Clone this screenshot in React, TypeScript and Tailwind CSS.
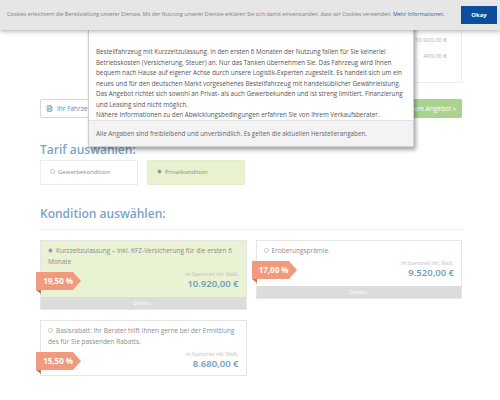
import { FileText } from 'lucide-react'

const popoverLines = [
  'Bestellfahrzeug mit Kurzzeitzulassung. In den ersten 6 Monaten der Nutzung fallen für Sie keinerlei',
  'Betriebskosten (Versicherung, Steuer) an. Nur das Tanken übernehmen Sie. Das Fahrzeug wird Ihnen',
  'bequem nach Hause auf eigener Achse durch unsere Logistik-Experten zugestellt. Es handelt sich um ein',
  'neues und für den deutschen Markt vorgesehenes Bestellfahrzeug mit handelsüblicher Gewährleistung.',
  'Das Angebot richtet sich sowohl an Privat- als auch Gewerbekunden und ist streng limitiert. Finanzierung',
  'und Leasing sind nicht möglich.',
  'Nähere Informationen zu den Abwicklungsbedingungen erfahren Sie von Ihrem Verkaufsberater.',
]

function Radio({ checked = false }: { checked?: boolean }) {
  return (
    <span className="inline-flex items-center justify-center w-[5px] h-[5px] rounded-full border border-[#c8c8c8] bg-white align-middle mr-[3px] relative -top-[1px]">
      {checked && <span className="w-[3px] h-[3px] rounded-full bg-[#8a8a8a]" />}
    </span>
  )
}

function Badge({ value }: { value: string }) {
  return (
    <div className="absolute left-[-12px] top-1/2 -translate-y-1/2 flex">
      <div className="relative h-[18px] w-[37px] bg-[#f19a7d] text-white font-bold text-[8px] leading-[18px] pl-[5px]">
        {value}
        <div className="absolute left-0 top-[18px] w-0 h-0 border-t-[4px] border-t-[#c9735a] border-l-[5px] border-l-transparent" />
      </div>
      <div className="w-0 h-0 border-y-[9px] border-y-transparent border-l-[8px] border-l-[#f19a7d]" />
    </div>
  )
}

interface CardProps {
  text: string
  price: string
  badge: string
  selected?: boolean
  details?: boolean
}

function OfferCard({ text, price, badge, selected = false, details = true }: CardProps) {
  return (
    <div className={`relative border border-[#e6e6e6] ${selected ? 'bg-[#e9f2d2]' : 'bg-white'}`}>
      <div className={`pt-[4px] px-[7px] ${details ? 'pb-[7px]' : 'pb-[5px]'}`}>
        <p className="text-[6.5px] leading-[11px] text-[#8c8c8c]">
          <Radio checked={selected} />
          {text}
        </p>
        <div className="relative text-right mt-[4px]">
          <div className="text-[4.5px] leading-[6px] text-[#bdbdbd]">im Sparvorteil inkl. MwSt.</div>
          <div className="text-[9.5px] leading-[12px] mt-[1px] text-[#6b98b8] font-semibold">{price}</div>
          <Badge value={badge} />
        </div>
      </div>
      {details && (
        <div className="h-[12px] bg-[#dcdcdc] text-white text-[5px] leading-[12px] text-center">Details »</div>
      )}
    </div>
  )
}

export default function App() {
  return (
    <div className="relative w-[500px] h-[400px] overflow-hidden bg-white font-['Open_Sans',sans-serif]">
      <div className="pl-[40px] pr-[38px] pt-[10px]">
        {/* summary card behind the popover */}
        <div className="ml-auto w-[207px] h-[73px] border border-[#ececec] bg-white pr-[14px] pt-[25px] text-right text-[6px] text-[#b0b0b0] leading-[8px]">
          <div>10.920,00 €</div>
          <div className="mt-[8px]">499,00 €</div>
        </div>

        <div className="flex justify-between mt-[16px] h-[19px]">
          <div className="flex items-center gap-[4px] border border-[#d6d6d6] rounded-[2px] pl-[5px] pr-[8px] text-[6.5px] text-[#5b8bc0]">
            <FileText size={7} strokeWidth={2.5} className="text-[#5b8bc0]" />
            Ihr Fahrzeug drucken
          </div>
          <div className="flex items-center bg-[#aad38f] rounded-[2px] px-[6px] text-[6.5px] text-white">Zum Angebot »</div>
        </div>

        <h2 className="mt-[24px] text-[12px] leading-[15px] font-semibold text-[#7ba4c8]">Tarif auswählen:</h2>
        <div className="flex gap-[9px] mt-[3px]">
          <div className="w-[98px] h-[25px] border border-[#ececec] flex items-center pl-[9px] text-[6px] text-[#8c8c8c]">
            <Radio />
            Gewerbekondition
          </div>
          <div className="w-[98px] h-[25px] border border-[#e4edc9] bg-[#e8f1d0] flex items-center pl-[9px] text-[6px] text-[#8c8c8c]">
            <Radio checked />
            Privatkondition
          </div>
        </div>

        <h2 className="mt-[21px] text-[12px] leading-[15px] font-semibold text-[#7ba4c8]">Kondition auswählen:</h2>

        <div className="mt-[8px] border-t border-[#f0f0f0] pt-[10px] grid grid-cols-2 gap-x-[9px] gap-y-[10px] items-start">
          <OfferCard
            selected
            text="Kurzzeitzulassung – inkl. KFZ-Versicherung für die ersten 6 Monate"
            price="10.920,00 €"
            badge="19,50 %"
          />
          <OfferCard text="Eroberungsprämie." price="9.520,00 €" badge="17,00 %" />
          <OfferCard
            details={false}
            text="Basisrabatt: Ihr Berater hilft Ihnen gerne bei der Ermittlung des für Sie passenden Rabatts."
            price="8.680,00 €"
            badge="15,50 %"
          />
        </div>
      </div>

      {/* info popover */}
      <div className="absolute left-[88px] top-[20px] w-[326px] h-[127px] bg-white border border-[#cfcfcf] shadow-[2px_3px_4px_rgba(0,0,0,0.35)] flex flex-col">
        <div className="pt-[26px] px-[7px] text-[6.3px] leading-[10.5px] text-[#555] flex-1 min-h-0">
          {popoverLines.map((line, i) => (
            <div key={i} className="whitespace-nowrap h-[10.5px]">{line}</div>
          ))}
        </div>
        <div className="h-[26px] shrink-0 bg-[#f3f3f3] border-t border-[#e2e2e2] px-[7px] flex items-center text-[6.3px] text-[#666]">
          Alle Angaben sind freibleibend und unverbindlich. Es gelten die aktuellen Herstellerangaben.
        </div>
      </div>

      {/* cookie bar */}
      <div className="absolute left-0 top-0 w-[500px] h-[30px] bg-[#e6e6e6] shadow-[0_2px_4px_rgba(0,0,0,0.25)] flex items-center pl-[7px] pr-[3px]">
        <p className="flex-1 text-[5.3px] text-[#808080] whitespace-nowrap">
          Cookies erleichtern die Bereitstellung unserer Dienste. Mit der Nutzung unserer Dienste erklären Sie sich damit einverstanden, dass wir Cookies verwenden.{' '}
          <span className="text-[#2a64aa]">Mehr Informationen.</span>
        </p>
        <div className="w-[36px] h-[18px] bg-[#0d4e9c] text-white text-[6px] font-bold flex items-center justify-center">Okay</div>
      </div>
    </div>
  )
}
